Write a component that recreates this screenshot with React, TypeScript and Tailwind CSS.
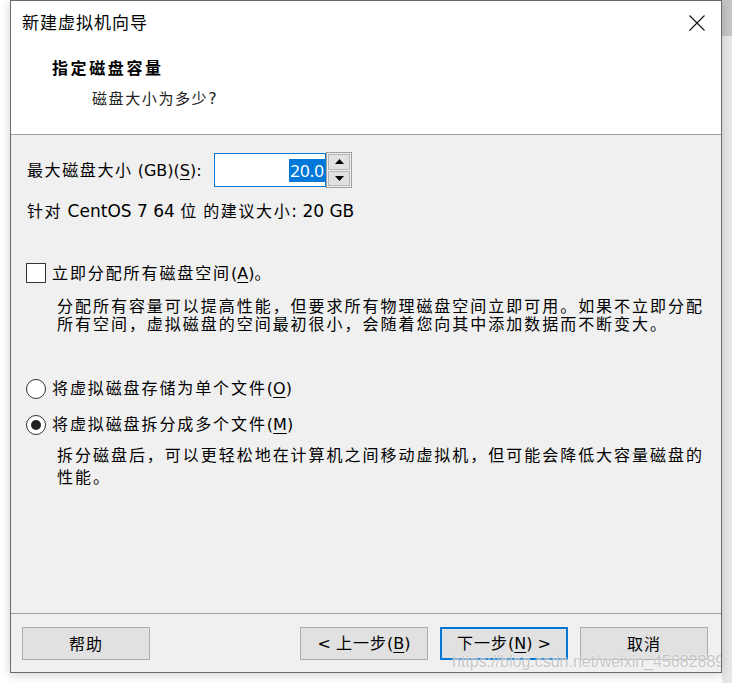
import React from "react";

const cjk = "font-['Noto_Sans','Noto_Sans_CJK_SC',sans-serif]";

// latin runs inside chinese text are wider in the reference (Segoe UI), DejaVu Sans gets close
function L({ children, size = "text-[16px]" }: { children: React.ReactNode; size?: string }) {
    return <span className={`font-['DejaVu_Sans',sans-serif] tracking-normal ${size}`}>{children}</span>;
}

function Key({ k }: { k: string }) {
    return <span className="underline underline-offset-[3px] decoration-1">{k}</span>;
}

function Checkbox() {
    return <div className="w-[20px] h-[20px] shrink-0 border border-[#333] bg-white" />;
}

function Radio({ checked }: { checked?: boolean }) {
    return (
        <div className="w-[20px] h-[20px] shrink-0 rounded-full border border-[#333] bg-white flex items-center justify-center">
            {checked && <div className="w-[10px] h-[10px] rounded-full bg-[#222]" />}
        </div>
    );
}

function SpinBox() {
    return (
        <div className="flex flex-row items-center">
            <div className="w-[112px] h-[34px] border border-[#0078d7] bg-white flex items-center justify-end">
                <span className="bg-[#0078d7] text-white text-[17px] leading-[23px] px-[1px] font-['Noto_Sans',sans-serif]">
                    20.0
                </span>
            </div>
            <div className="w-[26px] h-[36px] border border-[#a0a0a0] bg-[#f0f0f0] flex flex-col gap-[1px] p-[1px]">
                <div className="flex-1 bg-[#e1e1e1] border border-[#b5b5b5] flex items-center justify-center">
                    <svg width="9" height="5" viewBox="0 0 9 5">
                        <path d="M0 5 L4.5 0 L9 5 Z" fill="#000" />
                    </svg>
                </div>
                <div className="flex-1 bg-[#e1e1e1] border border-[#b5b5b5] flex items-center justify-center">
                    <svg width="9" height="5" viewBox="0 0 9 5">
                        <path d="M0 0 L4.5 5 L9 0 Z" fill="#000" />
                    </svg>
                </div>
            </div>
        </div>
    );
}

function WizButton({ children, primary }: { children: React.ReactNode; primary?: boolean }) {
    return (
        <div
            className={
                primary
                    ? "w-[128px] h-[33px] border-2 border-[#0078d7] bg-[#e1e1e1] flex items-center justify-center text-[16px] tracking-[1px] text-black"
                    : "w-[128px] h-[33px] border border-[#adadad] bg-[#e1e1e1] flex items-center justify-center text-[16px] tracking-[1px] text-black"
            }
        >
            <span className="whitespace-pre">{children}</span>
        </div>
    );
}

export default function App() {
    return (
        <div className={`w-[732px] h-[683px] bg-white overflow-hidden flex flex-row pl-[10px] ${cjk}`}>
            <div className="relative w-[712px] h-[673px] border border-[#6b6b6b] bg-[#f0f0f0] flex flex-col shadow-[0_2px_10px_rgba(0,0,0,0.18)] overflow-hidden">
                {/* title bar */}
                <div className="h-[44px] bg-white flex flex-row items-center justify-between pl-[11px] pr-[16px]">
                    <span className="text-[17px] tracking-[1px] leading-[24px] text-black">新建虚拟机向导</span>
                    <svg width="16" height="16" viewBox="0 0 16 16">
                        <path d="M0.5 0.5 L15.5 15.5 M15.5 0.5 L0.5 15.5" stroke="#111" strokeWidth="1.1" fill="none" />
                    </svg>
                </div>

                {/* header */}
                <div className="h-[90px] bg-white border-b border-[#a0a0a0] pl-[41px] pt-[13px]">
                    <p className="text-[16px] font-bold tracking-[2.6px] leading-[20px] text-black">指定磁盘容量</p>
                    <p className="mt-[10px] ml-[40px] text-[15px] tracking-[1.6px] leading-[20px] text-[#222]">
                        磁盘大小为多少<L>?</L>
                    </p>
                </div>

                {/* content */}
                <div className="flex-1 flex flex-col pl-[15px] text-black">
                    <div className="mt-[17px] flex flex-row items-center">
                        <span className="ml-[1px] w-[187px] text-[16px] tracking-[1.6px] leading-[20px] whitespace-nowrap">
                            最大磁盘大小
                            <L>
                                {" "}(GB)(<Key k="S" />):
                            </L>
                        </span>
                        <SpinBox />
                    </div>
                    <p className="mt-[13px] ml-[1px] text-[16px] tracking-[1.6px] leading-[20px] whitespace-nowrap">
                        针对<L size="text-[17px]"> CentOS 7 64 </L>位<L size="text-[17px]"> </L>的建议大小
                        <L size="text-[17px]">: 20 GB</L>
                    </p>

                    <div className="mt-[40px] flex flex-row items-center gap-[6px]">
                        <Checkbox />
                        <span className="text-[16px] tracking-[1.9px] leading-[20px] pt-[2px] whitespace-nowrap">
                            立即分配所有磁盘空间
                            <L>
                                (<Key k="A" />)
                            </L>
                            。
                        </span>
                    </div>
                    <div className="mt-[13px] ml-[31px] text-[16px] tracking-[1.97px] leading-[18px] whitespace-nowrap">
                        <p>分配所有容量可以提高性能，但要求所有物理磁盘空间立即可用。如果不立即分配</p>
                        <p>所有空间，虚拟磁盘的空间最初很小，会随着您向其中添加数据而不断变大。</p>
                    </div>

                    <div className="mt-[45px] flex flex-row items-center gap-[6px]">
                        <Radio />
                        <span className="text-[16px] tracking-[1.9px] leading-[20px] whitespace-nowrap">
                            将虚拟磁盘存储为单个文件
                            <L>
                                (<Key k="O" />)
                            </L>
                        </span>
                    </div>
                    <div className="mt-[15px] flex flex-row items-center gap-[6px]">
                        <Radio checked />
                        <span className="text-[16px] tracking-[1.9px] leading-[20px] whitespace-nowrap">
                            将虚拟磁盘拆分成多个文件
                            <L>
                                (<Key k="M" />)
                            </L>
                        </span>
                    </div>
                    <div className="mt-[10px] ml-[31px] text-[16px] tracking-[1.97px] leading-[21.5px] whitespace-nowrap">
                        <p>拆分磁盘后，可以更轻松地在计算机之间移动虚拟机，但可能会降低大容量磁盘的</p>
                        <p>性能。</p>
                    </div>
                </div>

                {/* footer */}
                <div className="h-[59px] border-t border-[#a0a0a0] flex flex-row justify-between pl-[11px] pr-[13px] pt-[13px]">
                    <WizButton>帮助</WizButton>
                    <div className="flex flex-row gap-[12px]">
                        <WizButton>
                            <L>{"< "}</L>上一步<L>(<Key k="B" />)</L>
                        </WizButton>
                        <WizButton primary>
                            下一步<L>(<Key k="N" />){" >"}</L>
                        </WizButton>
                        <WizButton>取消</WizButton>
                    </div>
                </div>

                {/* csdn watermark */}
                <span className="absolute left-[441px] top-[652px] text-[16px] leading-[18px] text-[rgba(185,185,185,0.8)] font-['Liberation_Sans',sans-serif] whitespace-nowrap [text-shadow:0_0_2px_#fff]">
                    https://blog.csdn.net/weixin_45682889
                </span>
            </div>
            <div className="w-[10px] flex flex-col">
                <div className="h-[36px] bg-[#c6c6c6]" />
                <div className="flex-1 bg-[#e8e8e8]" />
            </div>
        </div>
    );
}
